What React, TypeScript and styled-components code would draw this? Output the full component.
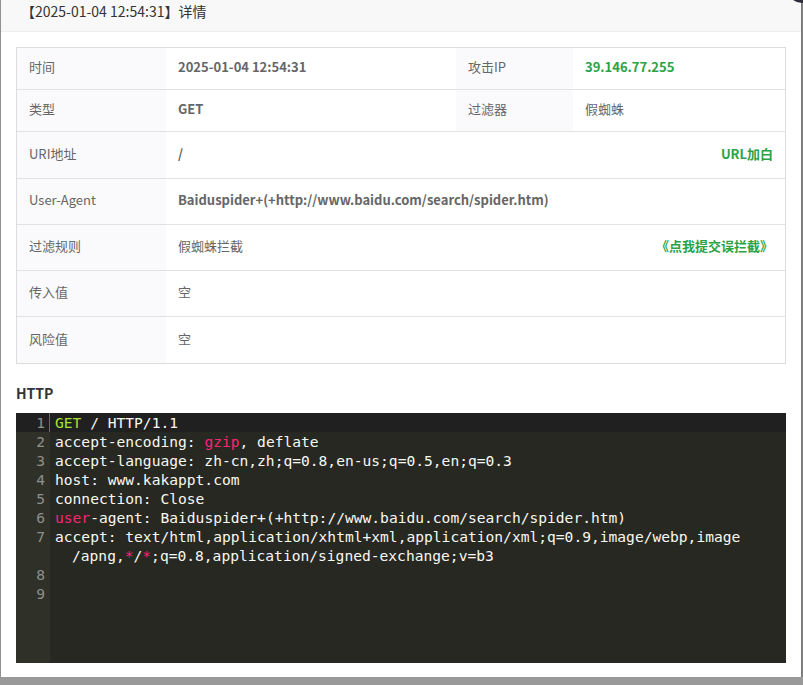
import React from "react";
import styled, { createGlobalStyle } from "styled-components";

const GlobalStyle = createGlobalStyle`
  html, body {
    margin: 0;
    padding: 0;
    background: #999999;
  }
  body {
    font-family: "Noto Sans CJK SC", "Noto Sans", sans-serif;
    color: #333;
  }
`;

const Dialog = styled.div`
  position: relative;
  margin-left: 1px;
  width: 800px;
  height: 677px;
  background: #fff;
  box-shadow: 1px 1px 3px rgba(0, 0, 0, 0.35);
  display: flex;
  flex-direction: column;
`;

const CloseDot = styled.span`
  position: absolute;
  top: -27px;
  right: -16px;
  width: 30px;
  height: 30px;
  border-radius: 50%;
  background: #2e2d3c;
`;

const TitleBar = styled.div`
  flex-shrink: 0;
  height: 31px;
  border-bottom: 1px solid #eee;
  background: #f8f8f8;
  padding-left: 20px;
  font-size: 14px;
  line-height: 22px;
  color: #333;
`;

const Body = styled.div`
  flex: 1;
  padding: 15px 15px 14px;
  display: flex;
  flex-direction: column;
`;

const Table = styled.div`
  flex-shrink: 0;
  border: 1px solid #ddd;
  display: flex;
  flex-direction: column;
`;

const Row = styled.div<{ $split?: boolean; $h: number }>`
  display: grid;
  grid-template-columns: ${(p) => (p.$split ? "149px 290px 117px 1fr" : "149px 1fr")};
  height: ${(p) => p.$h}px;
  border-top: 1px solid #e2e2e2;
  &:first-child {
    border-top: none;
  }
`;

const Label = styled.div`
  background: #fafafc;
  display: flex;
  align-items: center;
  padding: 0 0 4px 12px;
  font-size: 13px;
  color: #666;
`;

const Value = styled.div<{ $bold?: boolean; $green?: boolean }>`
  display: flex;
  align-items: center;
  justify-content: space-between;
  padding: 0 12px 4px 12px;
  font-size: 13px;
  font-weight: ${(p) => (p.$bold ? 700 : 400)};
  color: ${(p) => (p.$green ? "#2ba245" : "#666")};
`;

const Action = styled.a`
  color: #2ba245;
  font-weight: 700;
  font-size: 13px;
  text-decoration: none;
  cursor: pointer;
`;

const Heading = styled.div`
  flex-shrink: 0;
  margin-top: 20px;
  height: 29px;
  font-size: 14px;
  font-weight: 700;
  color: #333;
  line-height: 18px;
`;

const Editor = styled.div`
  flex-shrink: 0;
  height: 250px;
  background: linear-gradient(to right, #2f3129 34px, #272822 34px);
  font-family: "DejaVu Sans Mono", "Liberation Mono", monospace;
  font-size: 14.6px;
  line-height: 19px;
  color: #f8f8f2;
`;

const Line = styled.div<{ $active?: boolean }>`
  display: grid;
  grid-template-columns: 34px 1fr;
  height: 19px;
  background: ${(p) => (p.$active ? "#202020" : "transparent")};
`;

const Gutter = styled.span`
  text-align: right;
  padding-right: 5px;
  color: #8f908a;
`;

const Code = styled.span<{ $wrap?: boolean; $cursor?: boolean }>`
  padding-left: ${(p) => (p.$wrap ? 22 : 5)}px;
  white-space: pre;
  border-left: ${(p) => (p.$cursor ? "1px solid #6b6b6b" : "none")};
  margin-left: ${(p) => (p.$cursor ? -1 : 0)}px;
`;

const Kw = styled.span<{ $c: string }>`
  color: ${(p) => p.$c};
`;

const GREEN = "#a6e22e";
const PINK = "#f92672";

export default function App() {
  return (
    <>
      <GlobalStyle />
      <Dialog>
        <CloseDot />
        <TitleBar>【2025-01-04 12:54:31】详情</TitleBar>
        <Body>
          <Table>
            <Row $split $h={41}>
              <Label>时间</Label>
              <Value $bold>2025-01-04 12:54:31</Value>
              <Label>攻击IP</Label>
              <Value $bold $green>39.146.77.255</Value>
            </Row>
            <Row $split $h={41}>
              <Label>类型</Label>
              <Value $bold>GET</Value>
              <Label>过滤器</Label>
              <Value>假蜘蛛</Value>
            </Row>
            <Row $h={46}>
              <Label>URI地址</Label>
              <Value $bold>
                <span>/</span>
                <Action>URL加白</Action>
              </Value>
            </Row>
            <Row $h={45}>
              <Label>User-Agent</Label>
              <Value $bold>Baiduspider+(+http://www.baidu.com/search/spider.htm)</Value>
            </Row>
            <Row $h={45}>
              <Label>过滤规则</Label>
              <Value>
                <span>假蜘蛛拦截</span>
                <Action>《点我提交误拦截》</Action>
              </Value>
            </Row>
            <Row $h={45}>
              <Label>传入值</Label>
              <Value>空</Value>
            </Row>
            <Row $h={46}>
              <Label>风险值</Label>
              <Value>空</Value>
            </Row>
          </Table>
          <Heading>HTTP</Heading>
          <Editor>
            <Line $active>
              <Gutter>1</Gutter>
              <Code $cursor>
                <Kw $c={GREEN}>GET</Kw> / HTTP/1.1
              </Code>
            </Line>
            <Line>
              <Gutter>2</Gutter>
              <Code>
                accept-encoding: <Kw $c={PINK}>gzip</Kw>, deflate
              </Code>
            </Line>
            <Line>
              <Gutter>3</Gutter>
              <Code>accept-language: zh-cn,zh;q=0.8,en-us;q=0.5,en;q=0.3</Code>
            </Line>
            <Line>
              <Gutter>4</Gutter>
              <Code>host: www.kakappt.com</Code>
            </Line>
            <Line>
              <Gutter>5</Gutter>
              <Code>connection: Close</Code>
            </Line>
            <Line>
              <Gutter>6</Gutter>
              <Code>
                <Kw $c={PINK}>user</Kw>-agent: Baiduspider+(+http://www.baidu.com/search/spider.htm)
              </Code>
            </Line>
            <Line>
              <Gutter>7</Gutter>
              <Code>accept: text/html,application/xhtml+xml,application/xml;q=0.9,image/webp,image</Code>
            </Line>
            <Line>
              <Gutter />
              <Code $wrap>
                /apng,<Kw $c={PINK}>*</Kw>/<Kw $c={PINK}>*</Kw>;q=0.8,application/signed-exchange;v=b3
              </Code>
            </Line>
            <Line>
              <Gutter>8</Gutter>
              <Code />
            </Line>
            <Line>
              <Gutter>9</Gutter>
              <Code />
            </Line>
          </Editor>
        </Body>
      </Dialog>
    </>
  );
}
